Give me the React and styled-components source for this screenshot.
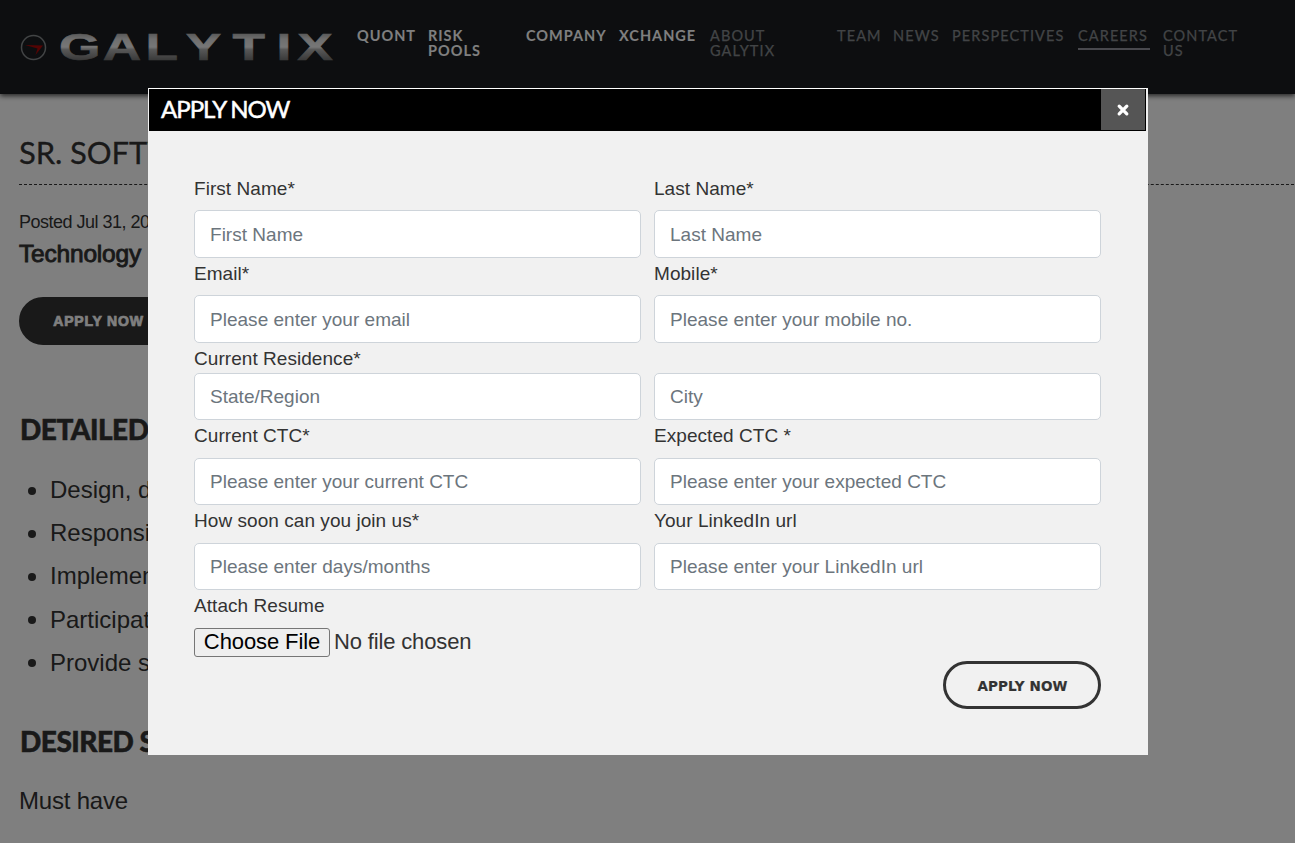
import React from "react";
import styled, { createGlobalStyle } from "styled-components";

const GlobalStyle = createGlobalStyle`
  *, *::before, *::after { box-sizing: border-box; }
  html, body { margin: 0; padding: 0; height: 100%; overflow: hidden; }
  body {
    background: #fff;
    color: #333;
    font-family: "Liberation Sans", Arial, sans-serif;
  }
`;

const Page = styled.div`
  height: 843px;
  overflow: hidden;
`;

const Header = styled.header`
  display: flex;
  align-items: flex-start;
  height: 94px;
  background: #1a1d20;
  box-shadow: 0 2px 5px rgba(0, 0, 0, 0.7);
`;

const Logo = styled.svg`
  display: block;
  flex: none;
  width: 357px;
  height: 94px;
`;

const Nav = styled.nav`
  display: flex;
  align-items: flex-start;
  padding-top: 28px;
  font-family: Lato, sans-serif;
  font-size: 14.5px;
  line-height: 15px;
`;

const NavItem = styled.a`
  flex: none;
  width: ${(p) => p.$width}px;
  font-weight: ${(p) => (p.$strong ? 700 : 400)};
  color: ${(p) => (p.$strong ? "#fff" : "#85898d")};
  -webkit-text-stroke: ${(p) => (p.$strong ? "0" : "0.25px #85898d")};
  letter-spacing: ${(p) => (p.$strong ? 1 : 1.1)}px;
  white-space: pre-line;
`;

const NavLabel = styled.span`
  display: inline-block;
  height: 22px;
  padding-right: ${(p) => (p.$active ? 1.5 : 0)}px;
  border-bottom: ${(p) => (p.$active ? "2px solid #92929c" : "0")};
`;

const Main = styled.main`
  padding: 33px 1px 0 19px;
`;

const JobTitle = styled.h1`
  margin: 0;
  height: 58px;
  border-bottom: 1px dashed #333;
  font: 400 31px/51px Lato, sans-serif;
  letter-spacing: -0.1px;
  white-space: nowrap;
  -webkit-text-stroke: 0.3px #333;
`;

const Posted = styled.p`
  margin: 23px 0 0;
  font-size: 18px;
  line-height: 28px;
  letter-spacing: -0.5px;
`;

const Department = styled.p`
  margin: 0;
  font-size: 24.5px;
  line-height: 36px;
  letter-spacing: -0.2px;
  -webkit-text-stroke: 0.9px #333;
`;

const PillButton = styled.button`
  display: block;
  width: 158px;
  height: 48px;
  padding: ${(p) => (p.$filled ? 0 : 2)}px 0 0 1px;
  border: 3px solid #333;
  border-radius: 24px;
  background: ${(p) => (p.$filled ? "#333" : "transparent")};
  color: ${(p) => (p.$filled ? "#fff" : "#333")};
  font: ${(p) =>
    p.$filled
      ? '700 14px/20px "Liberation Sans", sans-serif'
      : '700 13.5px/20px "DejaVu Sans", sans-serif'};
  letter-spacing: ${(p) => (p.$filled ? 0.8 : 0.15)}px;
  -webkit-text-stroke: ${(p) => (p.$filled ? "0.7px #fff" : "0.2px #333")};
`;

const PageAction = styled.div`
  margin-top: 25px;
`;

const SectionTitle = styled.h2`
  margin: ${(p) => p.$top}px 0 0 1px;
  font: 900 28px/40px Lato, sans-serif;
  letter-spacing: -0.5px;
  white-space: nowrap;
  -webkit-text-stroke: 0.5px #333;
`;

const Duties = styled.ul`
  margin: 19px 0 0;
  padding: 0 0 0 9px;
  list-style: none;
  font-size: 24px;
  line-height: 43.2px;
`;

const Duty = styled.li`
  display: flex;
  align-items: center;
  gap: 14px;
  &::before {
    content: "";
    width: 8px;
    height: 8px;
    margin-top: 2px;
    border-radius: 50%;
    background: #333;
  }
`;

const Paragraph = styled.p`
  margin: 22px 0 0;
  font-size: 24px;
  line-height: 36px;
  letter-spacing: -0.2px;
`;

const Overlay = styled.div`
  position: fixed;
  inset: 0;
  display: flex;
  justify-content: center;
  align-items: flex-start;
  padding: 88px 0 0 1px;
  background: rgba(0, 0, 0, 0.5);
`;

const Dialog = styled.section`
  width: 1000px;
  height: 667px;
  padding: 1px;
  background: #f1f1f1;
`;

const DialogHeader = styled.header`
  display: flex;
  justify-content: space-between;
  width: 997px;
  height: 42px;
  padding: 0 1px 1px 12px;
  background: #000;
  color: #fff;
  box-shadow: 0 -1px #fff;
`;

const DialogTitle = styled.h2`
  margin: 0;
  font: 400 24px/39px Lato, sans-serif;
  letter-spacing: -1px;
  -webkit-text-stroke: 0.5px #fff;
`;

const CloseButton = styled.button`
  display: grid;
  place-items: center;
  width: 44px;
  height: 41px;
  padding: 0;
  border: 0;
  background: #555;
`;

const Form = styled.form`
  display: grid;
  grid-template-columns: 447px 447px;
  column-gap: 13px;
  padding: 42px 0 0 45px;
`;

const Field = styled.label`
  display: block;
`;

const FieldLabel = styled.span`
  display: block;
  height: ${(p) => p.$height}px;
  font-size: 19px;
  line-height: 31px;
  letter-spacing: 0.05px;
`;

const Input = styled.input`
  display: block;
  width: 100%;
  height: ${(p) => p.$height}px;
  padding: 1px 15px 0;
  border: 1px solid #ced4da;
  border-radius: 5px;
  background: #fff;
  font: 400 19px/28px "Liberation Sans", Arial, sans-serif;
  letter-spacing: 0.02px;
  &::placeholder { color: #6c757d; opacity: 1; }
`;

const FilePicker = styled.div`
  display: flex;
  align-items: center;
  gap: 4px;
  height: 29px;
  font-size: 22px;
  line-height: 26px;
  letter-spacing: -0.15px;
`;

const FileStatus = styled.span`
  padding-bottom: 2px;
`;

const FileButton = styled.button`
  width: 136px;
  height: 29px;
  padding: 0 0 2px;
  border: 1px solid #767676;
  border-radius: 3px;
  background: #efefef;
  color: #000;
  font: 400 22px/25px "Liberation Sans", Arial, sans-serif;
  letter-spacing: -0.1px;
`;

const FormActions = styled.div`
  display: flex;
  grid-column: 1 / -1;
  justify-content: flex-end;
  padding-top: 4px;
`;

const navItems = [
  { label: "QUONT", width: 71, strong: true },
  { label: "RISK\nPOOLS", width: 98, strong: true },
  { label: "COMPANY", width: 93, strong: true },
  { label: "XCHANGE", width: 91, strong: true },
  { label: "ABOUT\nGALYTIX", width: 127 },
  { label: "TEAM", width: 56 },
  { label: "NEWS", width: 59 },
  { label: "PERSPECTIVES", width: 126 },
  { label: "CAREERS", width: 85, active: true },
  { label: "CONTACT\nUS", width: 90 },
];

const duties = [
  "Design, develop",
  "Responsible for",
  "Implement",
  "Participate in",
  "Provide support",
];

const fields = [
  { label: "First Name*", hint: "First Name", gap: 37, height: 48 },
  { label: "Last Name*", hint: "Last Name", gap: 37, height: 48 },
  { label: "Email*", hint: "Please enter your email", gap: 37, height: 48 },
  { label: "Mobile*", hint: "Please enter your mobile no.", gap: 37, height: 48 },
  { label: "Current Residence*", hint: "State/Region", gap: 30, height: 47 },
  { label: "", hint: "City", gap: 30, height: 47 },
  { label: "Current CTC*", hint: "Please enter your current CTC", gap: 38, height: 47 },
  { label: "Expected CTC *", hint: "Please enter your expected CTC", gap: 38, height: 47 },
  { label: "How soon can you join us*", hint: "Please enter days/months", gap: 38, height: 47 },
  { label: "Your LinkedIn url", hint: "Please enter your LinkedIn url", gap: 38, height: 47 },
];

function BrandLogo() {
  return (
    <Logo viewBox="0 0 357 94" role="img" aria-label="Galytix">
      <defs>
        <linearGradient id="metal" x1="0" y1="34" x2="0" y2="60" gradientUnits="userSpaceOnUse">
          <stop offset="0" stopColor="#b4b4b4" />
          <stop offset="0.2" stopColor="#dedede" />
          <stop offset="0.5" stopColor="#eeeeee" />
          <stop offset="0.6" stopColor="#b0b0b0" />
          <stop offset="1" stopColor="#747474" />
        </linearGradient>
      </defs>
      <circle cx="33.5" cy="47.5" r="12" fill="none" stroke="#85888b" strokeWidth="1.5" />
      <path d="M25 45L43 45.5L35.5 55L37.5 48.5Z" fill="#a80808" />
      <text
        transform="scale(1.44 1)"
        x="41 71.4 101 129 161.5 192 206.5"
        y="60"
        fontFamily="Liberation Sans"
        fontWeight="700"
        fontSize="37"
        fill="url(#metal)"
        stroke="url(#metal)"
        strokeWidth="0.6"
      >
        GALYTIX
      </text>
    </Logo>
  );
}

export default function App() {
  return (
    <>
      <GlobalStyle />
      <Page>
        <Header>
          <BrandLogo />
          <Nav>
            {navItems.map((item) => (
              <NavItem key={item.label} $width={item.width} $strong={item.strong}>
                <NavLabel $active={item.active}>{item.label}</NavLabel>
              </NavItem>
            ))}
          </Nav>
        </Header>
        <Main>
          <JobTitle>SR. SOFTWARE ENGINEER</JobTitle>
          <Posted>Posted Jul 31, 2023</Posted>
          <Department>Technology</Department>
          <PageAction>
            <PillButton $filled>APPLY NOW</PillButton>
          </PageAction>
          <SectionTitle $top={64}>DETAILED</SectionTitle>
          <Duties>
            {duties.map((duty) => (
              <Duty key={duty}>{duty}</Duty>
            ))}
          </Duties>
          <SectionTitle $top={37}>DESIRED SKILLS</SectionTitle>
          <Paragraph>Must have</Paragraph>
        </Main>
      </Page>
      <Overlay>
        <Dialog role="dialog" aria-label="Apply now">
          <DialogHeader>
            <DialogTitle>APPLY NOW</DialogTitle>
            <CloseButton aria-label="Close">
              <svg width="14" height="14" viewBox="0 0 14 14">
                <path d="M3.2 3.2L10.8 10.8M10.8 3.2L3.2 10.8" stroke="#fff" strokeWidth="3.3" strokeLinecap="round" />
              </svg>
            </CloseButton>
          </DialogHeader>
          <Form>
            {fields.map((field) => (
              <Field key={field.hint}>
                <FieldLabel $height={field.gap}>{field.label}</FieldLabel>
                <Input placeholder={field.hint} $height={field.height} />
              </Field>
            ))}
            <div>
              <FieldLabel $height={38}>Attach Resume</FieldLabel>
              <FilePicker>
                <FileButton type="button">Choose File</FileButton>
                <FileStatus>No file chosen</FileStatus>
              </FilePicker>
            </div>
            <FormActions>
              <PillButton type="button">APPLY NOW</PillButton>
            </FormActions>
          </Form>
        </Dialog>
      </Overlay>
    </>
  );
}
